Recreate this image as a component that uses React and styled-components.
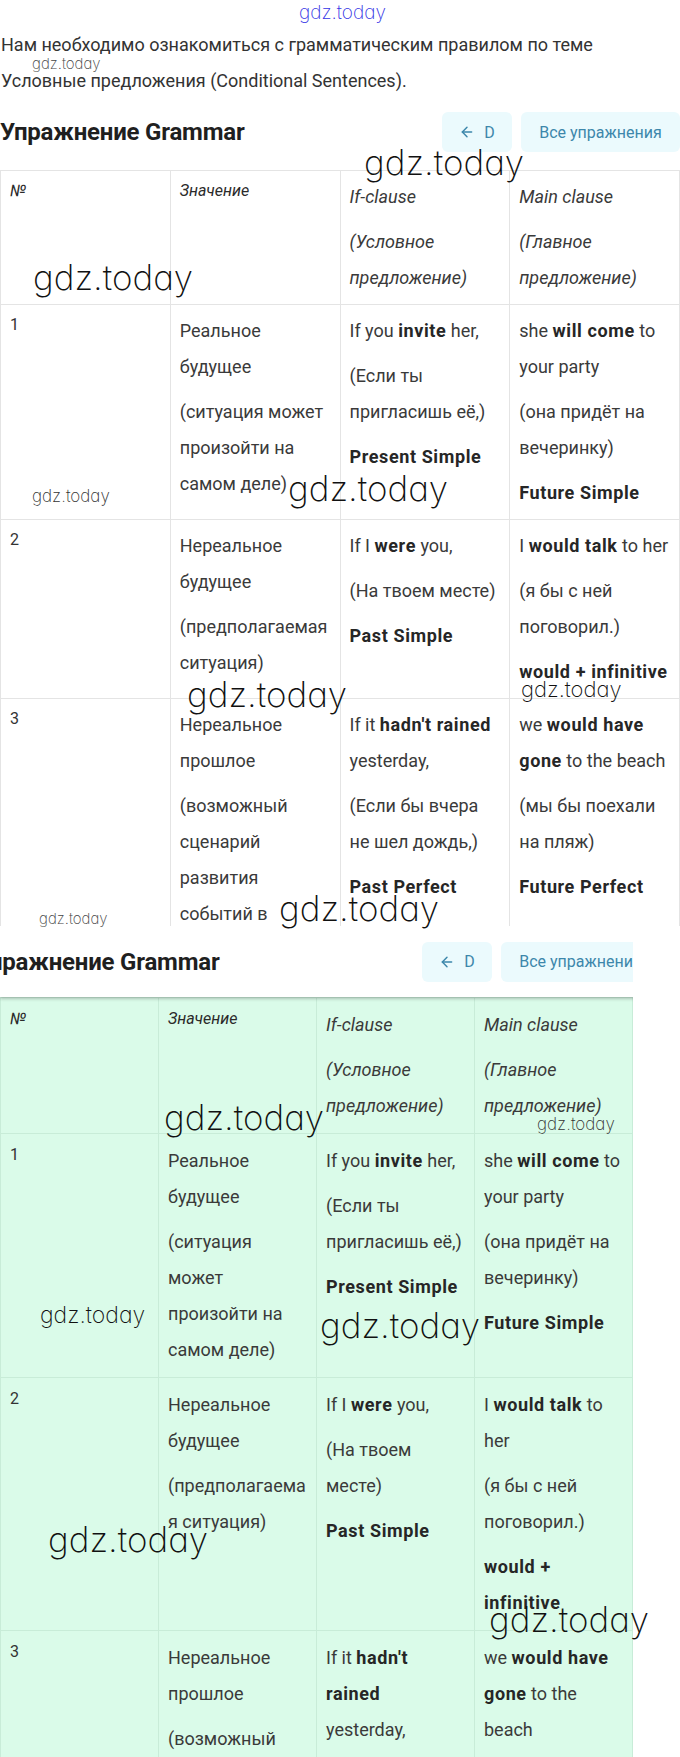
import React from "react";
import styled, { createGlobalStyle } from "styled-components";
import { ArrowLeft } from "lucide-react";

const GlobalStyle = createGlobalStyle`
  html, body {
    margin: 0;
    padding: 0;
    background: #fff;
  }
  body {
    font-family: Roboto, "Liberation Sans", sans-serif;
    color: #333;
  }
`;

const Page = styled.div`
  position: relative;
  width: 680px;
  height: 1757px;
  overflow: hidden;
  background: #fff;
`;

const Shot = styled.section`
  position: relative;
  width: ${(props) => props.width}px;
  height: ${(props) => (props.height ? `${props.height}px` : "auto")};
  overflow: hidden;
`;

const Intro = styled.p`
  margin: 0;
  padding: 27px 0 0 1px;
  font-size: 18px;
  line-height: 36px;
  color: #333;
`;

const Toolbar = styled.div`
  display: flex;
  align-items: center;
  justify-content: space-between;
  box-sizing: border-box;
  width: ${(props) => props.width}px;
  height: ${(props) => props.height}px;
  margin-top: ${(props) => props.top}px;
  ${(props) =>
    props.shadow &&
    `
    position: relative;
    z-index: 1;
    background: #fff;
    box-shadow: 0 2px 3px rgba(0, 0, 0, 0.22);
  `}
`;

const Heading = styled.h2`
  margin: 0 0 0 ${(props) => props.shift || 0}px;
  font-size: 24px;
  font-weight: 700;
  color: #1f1f1f;
  letter-spacing: -0.2px;
  white-space: nowrap;
`;

const NavGroup = styled.div`
  display: flex;
  gap: 9px;
`;

const NavButton = styled.button`
  display: flex;
  align-items: center;
  justify-content: center;
  gap: 9px;
  height: 40px;
  width: ${(props) => props.width}px;
  padding: 0;
  border: none;
  border-radius: 6px;
  background: #ebfafd;
  color: #3d87ab;
  font-family: Roboto, "Liberation Sans", sans-serif;
  font-size: 16px;
  white-space: nowrap;
  flex-shrink: 0;
`;

const Grid = styled.table`
  width: ${(props) => props.width}px;
  table-layout: fixed;
  border-collapse: collapse;
  margin-top: ${(props) => props.top}px;
  background: ${(props) => (props.green ? "#dafbe9" : "#fff")};

  td,
  th {
    border: 1px solid ${(props) => (props.green ? "#c8ecd8" : "#e4e4e4")};
    padding: ${(props) => (props.green ? "9px 10px 9px 9px" : "8px 7px 8px 9px")};
    vertical-align: top;
    text-align: left;
    font-weight: 400;
    overflow-wrap: anywhere;
  }
`;

const HeadSmall = styled.span`
  display: block;
  font-size: 16px;
  line-height: 24px;
  font-style: italic;
  color: #2a2a2a;
`;

const Num = styled.span`
  display: block;
  font-size: 16px;
  line-height: 24px;
  color: #333;
`;

const Para = styled.p`
  margin: 0 0 9px;
  font-size: 18px;
  line-height: 36px;
  color: #3a3a3a;
  font-style: ${(props) => (props.italic ? "italic" : "normal")};
  &:last-child {
    margin-bottom: 0;
  }
`;

const Strong = styled.b`
  font-weight: 700;
  letter-spacing: 0.6px;
  color: #262626;
`;

const Mark = styled.span`
  position: absolute;
  z-index: 5;
  left: ${(props) => props.x}px;
  top: ${(props) => props.y}px;
  font-family: Inter, Lato, sans-serif;
  font-feature-settings: "cv11" 1;
  font-weight: 200;
  font-size: ${(props) => props.size}px;
  line-height: 1;
  color: ${(props) => props.color || "#111"};
  white-space: nowrap;
  pointer-events: none;
`;

const rows = [
  {
    n: "1",
    meaning: [["Реальное будущее"], ["(ситуация может произойти на самом деле)"]],
    ifc: [
      <>If you <Strong>invite</Strong> her,</>,
      <>(Если ты пригласишь её,)</>,
      <Strong>Present Simple</Strong>,
    ],
    main: [
      <>she <Strong>will come</Strong> to your party</>,
      <>(она придёт на вечеринку)</>,
      <Strong>Future Simple</Strong>,
    ],
  },
  {
    n: "2",
    meaning: [["Нереальное будущее"], ["(предполагаемая ситуация)"]],
    ifc: [
      <>If I <Strong>were</Strong> you,</>,
      <>(На твоем месте)</>,
      <Strong>Past Simple</Strong>,
    ],
    main: [
      <>I <Strong>would talk</Strong> to her</>,
      <>(я бы с ней поговорил.)</>,
      <Strong>would + infinitive</Strong>,
    ],
  },
  {
    n: "3",
    meaning: [
      ["Нереальное прошлое"],
      ["(возможный сценарий развития событий в прошлом)"],
    ],
    ifc: [
      <>If it <Strong>hadn't rained</Strong> yesterday,</>,
      <>(Если бы вчера не шел дождь,)</>,
      <Strong>Past Perfect</Strong>,
    ],
    main: [
      <>we <Strong>would have gone</Strong> to the beach</>,
      <>(мы бы поехали на пляж)</>,
      <Strong>Future Perfect</Strong>,
    ],
  },
];

const Cell = ({ items }) => (
  <td>
    {items.map((item, i) => (
      <Para key={i}>{item}</Para>
    ))}
  </td>
);

const RulesTable = ({ width, top, green }) => (
  <Grid width={width} top={top} green={green}>
    <thead>
      <tr>
        <th>
          <HeadSmall>№</HeadSmall>
        </th>
        <th>
          <HeadSmall>Значение</HeadSmall>
        </th>
        <th>
          <Para italic>If-clause</Para>
          <Para italic>(Условное предложение)</Para>
        </th>
        <th>
          <Para italic>Main clause</Para>
          <Para italic>(Главное предложение)</Para>
        </th>
      </tr>
    </thead>
    <tbody>
      {rows.map((row) => (
        <tr key={row.n}>
          <td>
            <Num>{row.n}</Num>
          </td>
          <Cell items={row.meaning} />
          <Cell items={row.ifc} />
          <Cell items={row.main} />
        </tr>
      ))}
    </tbody>
  </Grid>
);

const marks = [
  { x: 299, y: 3, size: 19, color: "#3434e6" },
  { x: 32, y: 56, size: 15, color: "#444" },
  { x: 364, y: 145, size: 35 },
  { x: 33, y: 260, size: 35 },
  { x: 32, y: 488, size: 17, color: "#333" },
  { x: 288, y: 471, size: 35 },
  { x: 187, y: 677, size: 35 },
  { x: 521, y: 678, size: 22 },
  { x: 39, y: 911, size: 15, color: "#444" },
  { x: 279, y: 891, size: 35 },
  { x: 164, y: 1100, size: 35 },
  { x: 537, y: 1116, size: 17, color: "#333" },
  { x: 40, y: 1304, size: 23 },
  { x: 320, y: 1308, size: 35 },
  { x: 48, y: 1522, size: 35 },
  { x: 489, y: 1602, size: 35 },
];

const NavBar = ({ width, height, top, shift, shadow }) => (
  <Toolbar width={width} height={height} top={top} shadow={shadow}>
    <Heading shift={shift}>Упражнение Grammar</Heading>
    <NavGroup>
      <NavButton width={70}>
        <ArrowLeft size={16} strokeWidth={2.2} />
        <span>D</span>
      </NavButton>
      <NavButton width={159}>Все упражнения</NavButton>
    </NavGroup>
  </Toolbar>
);

export default function App() {
  return (
    <>
      <GlobalStyle />
      <Page>
        <Shot width={680} height={926}>
          <Intro>
            Нам необходимо ознакомиться с грамматическим правилом по теме
            <br />
            Условные предложения (Conditional Sentences).
          </Intro>
          <NavBar width={680} height={40} top={13} shift={0} />
          <RulesTable width={680} top={18} />
        </Shot>
        <Shot width={633}>
          <NavBar width={660} height={71} top={0} shift={-25} shadow />
          <RulesTable width={633} top={0} green />
        </Shot>
        {marks.map((m, i) => (
          <Mark key={i} x={m.x} y={m.y} size={m.size} color={m.color}>
            gdz.today
          </Mark>
        ))}
      </Page>
    </>
  );
}
